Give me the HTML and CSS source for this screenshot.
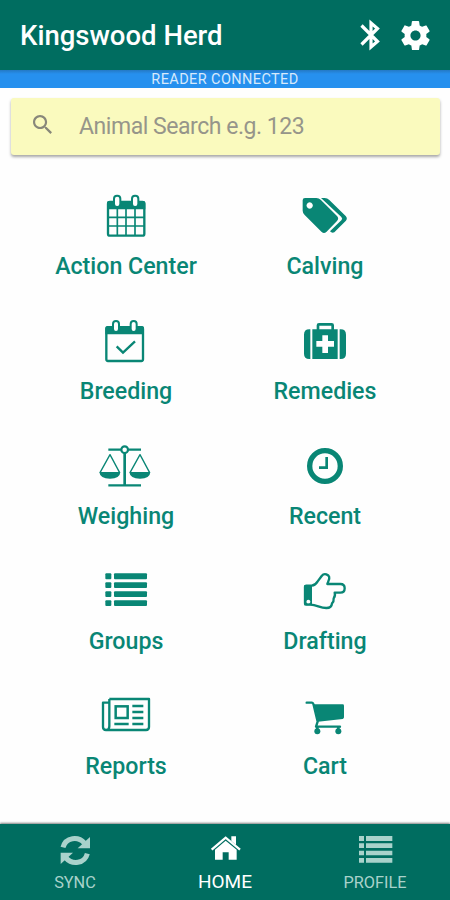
FILE: index.html
```html
<!DOCTYPE html>
<html lang="en">
<head>
<meta charset="utf-8">
<title>Kingswood Herd</title>
<link rel="stylesheet" href="styles.css">
</head>
<body>
<div class="app">
  <header class="header">
    <h1 class="title">Kingswood Herd</h1>
    <svg class="bluetooth" viewBox="0 0 20 32" fill="none" stroke="currentColor" stroke-width="3.200"><path d="M1.500 6.500 L17.500 22.500 L11 28 V4 L17.500 9.500 L1.500 25.500"/></svg>
    <svg class="gear" viewBox="2 2 20 20" fill="currentColor"><path d="M19.430 12.980c.04-.32.07-.64.07-.98s-.03-.66-.07-.98l2.110-1.650c.19-.15.24-.42.12-.64l-2-3.460c-.12-.22-.39-.3-.61-.22l-2.490 1c-.52-.4-1.080-.73-1.690-.98l-.38-2.650C14.460 2.180 14.250 2 14 2h-4c-.25 0-.46.18-.49.42l-.38 2.650c-.61.25-1.170.59-1.690.98l-2.490-1c-.23-.09-.49 0-.61.22l-2 3.460c-.13.22-.07.49.12.64l2.110 1.650c-.04.32-.07.65-.07.98s.03.66.07.98l-2.110 1.650c-.19.15-.24.42-.12.64l2 3.460c.12.22.39.3.61.22l2.490-1c.52.4 1.080.73 1.690.98l.38 2.650c.03.24.24.42.49.42h4c.25 0 .46-.18.49-.42l.38-2.650c.61-.25 1.170-.59 1.690-.98l2.490 1c.23.09.49 0 .61-.22l2-3.460c.12-.22.07-.49-.12-.64l-2.110-1.650zM12 15.500c-1.930 0-3.500-1.570-3.500-3.500s1.570-3.500 3.500-3.500 3.500 1.570 3.500 3.500-1.570 3.500-3.500 3.500z"/></svg>
  </header>
  <div class="status">READER CONNECTED</div>
  <label class="search">
    <svg class="lens" viewBox="3 3 17.500 17.500" fill="currentColor"><path d="M15.500 14h-.79l-.28-.27C15.410 12.590 16 11.110 16 9.500 16 5.910 13.090 3 9.500 3S3 5.910 3 9.500 5.910 16 9.500 16c1.610 0 3.090-.59 4.230-1.570l.27.28v.79l5 4.990L20.490 19l-4.990-5zm-6 0C7.010 14 5 11.990 5 9.500S7.010 5 9.500 5 14 7.010 14 9.500 11.990 14 9.500 14z"/></svg>
    <span class="hint">Animal Search e.g. 123</span>
  </label>

  <main class="menu">
    <div class="tile">
      <svg class="icon" viewBox="168 30 180 150"><rect x="204" y="66" width="109" height="101" rx="6" fill="none" stroke="currentColor" stroke-width="7"/><path fill="currentColor" d="M201 69q0-6 6-6h103q6 0 6 6v19H201z"/><path fill="none" stroke="currentColor" stroke-width="5" d="M232 86v80M258 86v80M285 86v80M204 112h110M204 138h110"/><rect x="222" y="47" width="19" height="34" rx="9" fill="#fff" stroke="currentColor" stroke-width="6"/><rect x="276" y="47" width="19" height="34" rx="9" fill="#fff" stroke="currentColor" stroke-width="6"/></svg>
      <span class="label">Action Center</span>
    </div>
    <div class="tile">
      <svg class="icon" viewBox="165 30 180 150" fill="currentColor"><path fill-rule="evenodd" d="M188 61q0-7 7-7h34q8 0 13 5l49 49q7 8 0 15l-32 33q-7 6-14 0l-51-51q-6-6-6-13zM209 67a9.500 9.500 0 1 0 .1 0z"/><path d="M243 54h11q8 0 14 6l49 48q7 8 0 15l-34 34q-7 4-13-3l34-33q5-5 0-10z"/></svg>
      <span class="label">Calving</span>
    </div>
    <div class="tile">
      <svg class="icon" viewBox="168 15 180 150"><rect x="199" y="52" width="110" height="101" rx="5" fill="none" stroke="currentColor" stroke-width="7"/><path fill="currentColor" d="M196 54q0-6 6-6h104q6 0 6 6v19H196z"/><rect x="219" y="33" width="18" height="33" rx="9" fill="#fff" stroke="currentColor" stroke-width="6"/><rect x="272" y="33" width="18" height="33" rx="9" fill="#fff" stroke="currentColor" stroke-width="6"/><path d="M230 109l19 19 36-34" fill="none" stroke="currentColor" stroke-width="7"/></svg>
      <span class="label">Breeding</span>
    </div>
    <div class="tile">
      <svg class="icon" viewBox="165 15 180 150" fill="currentColor"><path d="M211 58v89h-3q-16 0-16-16V74q0-16 16-16zM299 58v89h3q16 0 16-16V74q0-16-16-16z"/><path fill-rule="evenodd" d="M217 58h13V46q0-7 7-7h38q7 0 7 7v12h11v89h-76zM238 58h36V47h-36zM247 76v17h-18v17h18v19h17v-19h18V93h-18V76z"/></svg>
      <span class="label">Remedies</span>
    </div>
    <div class="tile">
      <svg class="icon" viewBox="168 15 180 150" fill="none" stroke="currentColor"><path stroke-width="7" d="M205 44h38M265 44h38M205 151h98"/><path stroke-width="8" d="M254 54v96"/><circle cx="254" cy="44" r="10" stroke-width="6.500"/><path stroke-width="4" stroke-linejoin="round" d="M180 113l30-54 29 54M270 113l30-54 29 54"/><path fill="currentColor" stroke="none" d="M178 111h63q-1 20-31 20t-32-20zM268 111h63q-1 20-31 20t-32-20z"/></svg>
      <span class="label">Weighing</span>
    </div>
    <div class="tile">
      <svg class="icon" viewBox="165 15 180 150" fill="none" stroke="currentColor"><circle cx="255" cy="93" r="46" stroke-width="16"/><path d="M260 66v32h-23" stroke-width="8"/></svg>
      <span class="label">Recent</span>
    </div>
    <div class="tile">
      <svg class="icon" viewBox="168 15 180 150" fill="currentColor"><rect x="196" y="40" width="18" height="18" rx="3"/><rect x="222" y="40" width="99" height="18" rx="3"/><rect x="196" y="67" width="18" height="17" rx="3"/><rect x="222" y="67" width="99" height="17" rx="3"/><rect x="196" y="94" width="18" height="17" rx="3"/><rect x="222" y="94" width="99" height="17" rx="3"/><rect x="196" y="121" width="18" height="17" rx="3"/><rect x="222" y="121" width="99" height="17" rx="3"/></svg>
      <span class="label">Groups</span>
    </div>
    <div class="tile">
      <svg class="icon" viewBox="165 15 180 150"><path fill="none" stroke="currentColor" stroke-width="7" stroke-linejoin="round" d="M195 81q0-4 4-4h16q11-1 18-13l12-16q6-8 14-5 14 5 6 21l-3 8h39q13 0 13 13t-13 13h-17q3 9-3 17 1 9-5 15-1 14-17 14c-20 0-28-10-48-10h-12q-4 0-4-4z"/><path fill="currentColor" fill-rule="evenodd" d="M193 75h23v61h-23zM205 119a6 6 0 1 0 .1 0z"/></svg>
      <span class="label">Drafting</span>
    </div>
    <div class="tile">
      <svg class="icon" viewBox="168 15 180 150" fill="none" stroke="currentColor" stroke-width="7"><path stroke-linejoin="round" d="M208 42h119v84q0 9-9 9H198q-9 0-9-9V53h19M208 42v82q0 11-9 11"/><rect x="227" y="64" width="36" height="35" stroke-width="7.500"/><path d="M277 63h33M277 81h33M277 99h33M223 117h43M277 117h33"/></svg>
      <span class="label">Reports</span>
    </div>
    <div class="tile">
      <svg class="icon" viewBox="165 390 180 150" fill="currentColor"><path d="M219 433h89q4 0 4 4v35q0 4-4 5l-74 8q-4-27-15-52z"/><path fill="none" stroke="currentColor" stroke-width="7" stroke-linecap="round" stroke-linejoin="round" d="M200 428h15q4 0 6 7l12 50-5 15h72"/><circle cx="232" cy="514" r="9"/><circle cx="295" cy="514" r="9"/><path d="M228 500h8v8h-8zM291 500h8v8h-8z"/></svg>
      <span class="label">Cart</span>
    </div>
  </main>

  <nav class="tabs">
    <div class="tab">
      <svg class="tab-icon" viewBox="175 70 105 105"><g fill="none" stroke="currentColor" stroke-width="15"><path d="M190 113c8-31 46-34 64-13M263 132c-8 31-46 34-64 13"/></g><path fill="currentColor" d="M271 82v34h-37zM183 163v-34h37z"/></svg>
      <span>SYNC</span>
    </div>
    <div class="tab active">
      <svg class="tab-icon" viewBox="623 70 105 105" fill="currentColor"><path d="M676 93l33 27v30h-24v-22h-18v22h-23v-30z"/><path fill="none" stroke="currentColor" stroke-width="7" d="M634 120l42-36 43 36"/><path d="M693 80h14v26l-14-12z"/></svg>
      <span>HOME</span>
    </div>
    <div class="tab">
      <svg class="tab-icon" viewBox="1074 70 105 105" fill="currentColor"><path d="M1077 79h15v15h-15zM1098 79h79v15h-79zM1077 101h15v14h-15zM1098 101h79v14h-79zM1077 123h15v14h-15zM1098 123h79v14h-79zM1077 145h15v14h-15zM1098 145h79v14h-79z"/></svg>
      <span>PROFILE</span>
    </div>
  </nav>
</div>
</body>
</html>
```
FILE: styles.css
```css
* { box-sizing: border-box; }
body { margin: 0; background: #fefefe; font-family: Roboto, "Liberation Sans", sans-serif; }
.app { display: flex; flex-direction: column; width: 450px; height: 900px; overflow: hidden; }
.header { display: flex; align-items: center; height: 70px; padding: 0 20px 0 20px; background: #006d60; color: #fff; }
.title { margin: 0 auto 0 0; padding-top: 1px; font-size: 27.500px; font-weight: 500; line-height: 70px; white-space: nowrap; }
.bluetooth { width: 20px; height: 32px; margin-right: 21px; }
.gear { width: 29px; height: 29px; }
.status { height: 18px; background: linear-gradient(#2479c4, #2690ee 4px); color: #d7e9fb; font-size: 14.500px; letter-spacing: .4px; line-height: 19px; text-align: center; }
.search { display: flex; align-items: center; height: 57px; margin: 10px 10px 0 11px; padding-left: 22px; border-radius: 3px; background: #fafabe; color: #96958a; box-shadow: 0 2px 3px rgba(0, 0, 0, .35); }
.lens { width: 19px; height: 19px; margin-right: 27px; color: #88877a; position: relative; top: -2px; }
.hint { font-size: 23px; letter-spacing: -.46px; white-space: nowrap; }
.menu { display: grid; grid-template-columns: 199px 199px; grid-auto-rows: 125px; flex: 1; margin-top: 35px; padding-left: 26.500px; color: #098675; }
.tile { display: flex; flex-direction: column; align-items: center; }
.icon { width: 60px; height: 50px; }
.label { margin-top: 11px; font-size: 23.200px; font-weight: 500; line-height: 30px; white-space: nowrap; }
.tabs { display: grid; grid-template-columns: repeat(3, 150px); height: 76px; background: #006d60; box-shadow: 0 -1px 2px rgba(0, 0, 0, .5); }
.tab { display: flex; flex-direction: column; align-items: center; padding-top: 9px; color: #a9d2cb; font-size: 16.300px; line-height: 24px; }
.tab-icon { width: 35px; height: 35px; margin-bottom: 3px; }
.active { color: #fff; font-size: 19px; line-height: 22px; }
```
